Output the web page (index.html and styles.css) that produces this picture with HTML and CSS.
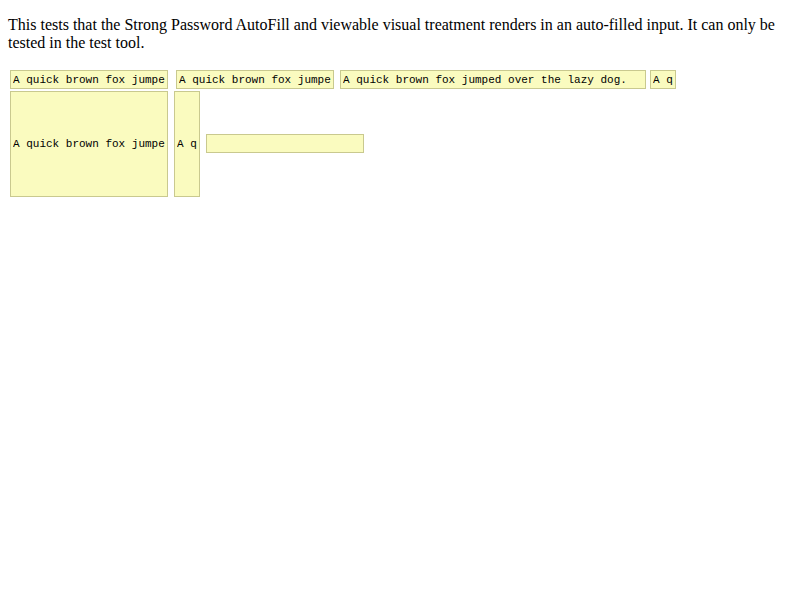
FILE: index.html
```html
<!DOCTYPE html>
<html>
<head>
<meta charset="utf-8">
<link rel="stylesheet" href="styles.css">
</head>
<body>
<p class="intro">This tests that the Strong Password AutoFill and viewable visual treatment renders in an auto-filled input. It can only be tested in the test tool.</p>
<div class="fields">
  <div class="row row-top">
    <input class="field w-std gap-8" type="text" value="A quick brown fox jumped over the lazy dog." readonly>
    <input class="field w-std gap-6" type="text" value="A quick brown fox jumped over the lazy dog." readonly>
    <input class="field w-wide gap-4" type="text" value="A quick brown fox jumped over the lazy dog." readonly>
    <input class="field w-narrow" type="text" value="A quick brown fox jumped over the lazy dog." readonly>
  </div>
  <div class="row row-bottom">
    <input class="field w-std tall gap-6" type="text" value="A quick brown fox jumped over the lazy dog." readonly>
    <input class="field w-narrow tall gap-6" type="text" value="A quick brown fox jumped over the lazy dog." readonly>
    <input class="field w-std empty" type="text" value="" readonly>
  </div>
</div>
</body>
</html>
```

FILE: styles.css
```css
html, body {
  margin: 0;
  padding: 0;
  background: #ffffff;
}

body {
  padding: 8px;
  font-family: "Liberation Serif", "Times New Roman", serif;
  font-size: 16px;
  color: #000000;
}

.intro {
  margin: 8px 0 16px 0;
  line-height: 18px;
}

.fields {
  display: flex;
  flex-direction: column;
  gap: 2px;
  padding: 2px 0 0 2px;
}

.row {
  display: flex;
  align-items: center;
}

.field {
  box-sizing: border-box;
  height: 19px;
  margin: 0;
  padding: 1px 2px;
  border: 1px solid #c9c98f;
  background: #fafbbf;
  color: #000000;
  font-family: "Liberation Mono", "Courier New", monospace;
  font-size: 11px;
  outline: none;
}

.tall {
  height: 106px;
}

.empty {
  margin-bottom: 1px;
}

.w-std { width: 158px; }
.w-wide { width: 306px; }
.w-narrow { width: 26px; }

.gap-8 { margin-right: 8px; }
.gap-6 { margin-right: 6px; }
.gap-4 { margin-right: 4px; }
```
